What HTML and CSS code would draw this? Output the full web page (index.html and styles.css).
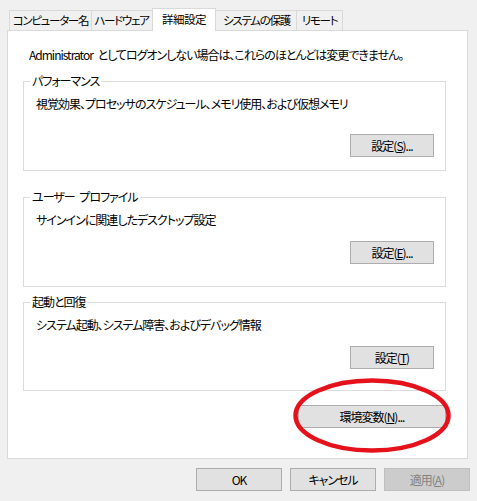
FILE: index.html
```html
<!DOCTYPE html>
<html lang="ja">
<head>
<meta charset="utf-8">
<title>システムのプロパティ</title>
<link rel="stylesheet" href="styles.css">
</head>
<body>
<div class="window">
  <div class="tabs">
    <div class="tab tab--name">コンピューター名</div>
    <div class="tab tab--hardware">ハードウェア</div>
    <div class="tab tab--active">詳細設定</div>
    <div class="tab tab--protect">システムの保護</div>
    <div class="tab tab--remote">リモート</div>
  </div>
  <div class="panel">
    <p class="intro">Administrator としてログオンしない場合は、これらのほとんどは変更できません。</p>
    <fieldset class="group group--first">
      <legend>パフォーマンス</legend>
      <p class="desc">視覚効果、プロセッサのスケジュール、メモリ使用、および仮想メモリ</p>
      <div class="group-actions"><button class="btn btn--setting">設定(<u>S</u>)...</button></div>
    </fieldset>
    <fieldset class="group group--second">
      <legend>ユーザー プロファイル</legend>
      <p class="desc">サインインに関連したデスクトップ設定</p>
      <div class="group-actions"><button class="btn btn--setting">設定(<u>E</u>)...</button></div>
    </fieldset>
    <fieldset class="group group--third">
      <legend>起動と回復</legend>
      <p class="desc">システム起動、システム障害、およびデバッグ情報</p>
      <div class="group-actions"><button class="btn btn--setting">設定(<u>T</u>)</button></div>
    </fieldset>
    <div class="env-row"><button class="btn btn--env">環境変数(<u>N</u>)...</button></div>
  </div>
  <div class="footer">
    <button class="btn btn--dialog">OK</button>
    <button class="btn btn--dialog">キャンセル</button>
    <button class="btn btn--dialog btn--disabled">適用(<u>A</u>)</button>
  </div>
  <svg class="highlight" width="477" height="501" viewBox="0 0 477 501">
    <ellipse cx="372" cy="415.5" rx="76.5" ry="35" fill="none" stroke="#e5121c" stroke-width="4.5"/>
  </svg>
</div>
</body>
</html>
```
FILE: styles.css
```css
* { box-sizing: border-box; }

html, body {
  margin: 0;
  padding: 0;
  background: #f0f0f0;
}

body {
  width: 477px;
  height: 501px;
  overflow: hidden;
  font-family: "Noto Sans CJK JP", "Noto Sans", sans-serif;
  font-size: 12px;
  line-height: 16px;
  letter-spacing: -1px;
  word-spacing: 3px;
  color: #000;
  font-feature-settings: "palt";
}

.window {
  position: relative;
  width: 477px;
  height: 501px;
  padding-top: 8px;
}

.tabs {
  position: relative;
  z-index: 1;
  display: flex;
  align-items: flex-end;
  height: 22px;
  margin-left: 9px;
}

.tab {
  flex-shrink: 0;
  height: 20px;
  line-height: 19px;
  padding: 0;
  text-align: center;
  font-size: 11.5px;
  letter-spacing: -1.3px;
  border: 1px solid #d9d9d9;
  border-bottom: 0;
  background: #f0f0f0;
  margin-left: -1px;
  white-space: nowrap;
}

.tab:first-child { margin-left: 0; }

.tab--name { width: 83px; }
.tab--hardware { width: 63px; padding-right: 2px; }
.tab--protect { width: 84px; padding-left: 3px; }
.tab--remote { width: 47px; }

.tab--active {
  position: relative;
  z-index: 2;
  width: 64px;
  height: 23px;
  line-height: 21px;
  letter-spacing: -0.5px;
  margin: 0 -2px -1px -2px;
  background: #fff;
}

.panel {
  width: 461px;
  height: 429px;
  margin-left: 7px;
  border: 1px solid #d9d9d9;
  background: #fff;
  padding: 0 21px 0 15px;
}

.intro {
  margin: 16px 0 0 6px;
  white-space: nowrap;
}

.group {
  margin: 0;
  min-width: 0;
  padding: 7px 11px 13px 12px;
  border: 1px solid #dcdcdc;
}

.group legend {
  margin-left: -6px;
  padding: 0 2px;
  line-height: 16px;
}

.group--first { margin-top: 10px; }
.group--second { margin-top: 18px; padding-bottom: 22px; }
.group--third { margin-top: 7px; padding-bottom: 21px; }

.desc {
  margin: 0;
  white-space: nowrap;
}

.group-actions {
  display: flex;
  justify-content: flex-end;
  margin-top: 13px;
}

.group--first .group-actions { margin-top: 22px; }

.btn {
  height: 23px;
  padding: 0;
  border: 1px solid #adadad;
  background: #e1e1e1;
  color: #000;
  font: inherit;
  letter-spacing: -1px;
  word-spacing: 3px;
  line-height: 20px;
  font-feature-settings: "palt";
}

.btn--setting { width: 84px; }

.env-row {
  display: flex;
  justify-content: flex-end;
  margin-top: 14px;
}

.btn--env { width: 148px; }

.footer {
  display: flex;
  justify-content: flex-end;
  gap: 8px;
  margin-top: 9px;
  padding-right: 7px;
}

.btn--dialog { width: 86px; }

.btn--disabled {
  background: #cccccc;
  border-color: #bfbfbf;
  color: #838383;
}

.highlight {
  position: absolute;
  left: 0;
  top: 0;
  pointer-events: none;
}
```
